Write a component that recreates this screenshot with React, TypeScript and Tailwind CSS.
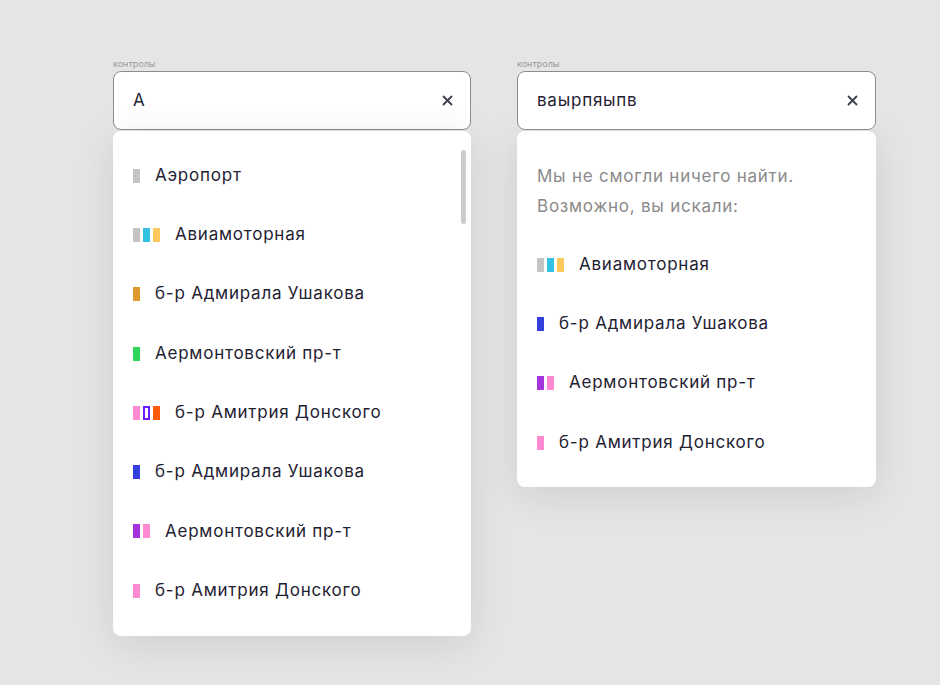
import React from "react";

type Bar = { color: string; outline?: boolean };
type Station = { name: string; bars: Bar[] };

const gray = { color: "bg-[#c4c4c4]" };
const cyan = { color: "bg-[#33c1e3]" };
const yellow = { color: "bg-[#ffc85c]" };

const allStations: Station[] = [
  { name: "Аэропорт", bars: [gray] },
  { name: "Авиамоторная", bars: [gray, cyan, yellow] },
  { name: "б-р Адмирала Ушакова", bars: [{ color: "bg-[#e0992f]" }] },
  { name: "Аермонтовский пр-т", bars: [{ color: "bg-[#2fd45c]" }] },
  {
    name: "б-р Амитрия Донского",
    bars: [
      { color: "bg-[#ff8ad2]" },
      { color: "bg-white", outline: true },
      { color: "bg-[#ff5a0a]" },
    ],
  },
  { name: "б-р Адмирала Ушакова", bars: [{ color: "bg-[#3340dd]" }] },
  {
    name: "Аермонтовский пр-т",
    bars: [{ color: "bg-[#a634dd]" }, { color: "bg-[#ff8ad2]" }],
  },
  { name: "б-р Амитрия Донского", bars: [{ color: "bg-[#ff8ad2]" }] },
];

const suggestions: Station[] = [
  { name: "Авиамоторная", bars: [gray, cyan, yellow] },
  { name: "б-р Адмирала Ушакова", bars: [{ color: "bg-[#3340dd]" }] },
  {
    name: "Аермонтовский пр-т",
    bars: [{ color: "bg-[#a634dd]" }, { color: "bg-[#ff8ad2]" }],
  },
  { name: "б-р Амитрия Донского", bars: [{ color: "bg-[#ff8ad2]" }] },
];

function ClearIcon() {
  return (
    <svg width="11" height="11" viewBox="0 0 11 11" fill="none">
      <path
        d="M1.5 1.5l8 8M9.5 1.5l-8 8"
        stroke="#3b3f4c"
        strokeWidth="1.8"
        strokeLinecap="round"
      />
    </svg>
  );
}

function StationRow({ station }: { station: Station }) {
  return (
    <div className="flex h-[59.3px] items-center">
      <div className="flex gap-[3px]">
        {station.bars.map((bar, i) =>
          bar.outline ? (
            <span
              key={i}
              className="h-[14px] w-[7px] border-2 border-[#6a1cff] bg-white"
            />
          ) : (
            <span key={i} className={`h-[14px] w-[7px] ${bar.color}`} />
          )
        )}
      </div>
      <span className="ml-[15px] text-[17px] tracking-[0.045em] text-[#1f2233]">
        {station.name}
      </span>
    </div>
  );
}

function SearchField({ value }: { value: string }) {
  return (
    <div className="flex flex-col">
      <span className="mb-[2px] h-[10px] text-[9px] leading-[10px] text-[#9a9a9a]">
        контролы
      </span>
      <div className="flex h-[59px] items-center justify-between rounded-[8px] border border-[#8c8c8c] bg-white pl-[19px] pr-[17px]">
        <span className="text-[17px] tracking-[0.045em] text-[#1f2233]">
          {value}
        </span>
        <ClearIcon />
      </div>
    </div>
  );
}

export default function App() {
  return (
    <div
      className="flex h-[685px] w-[940px] items-start gap-[46px] bg-[#e5e5e5] pl-[113px] pt-[59px]"
      style={{ fontFamily: "Inter, 'Noto Sans', sans-serif" }}
    >
      {/* Список с результатами */}
      <div className="w-[358px]">
        <SearchField value="А" />
        <div className="relative mt-px rounded-[8px] bg-white pb-[16px] pl-[20px] pt-[15px] shadow-[0_8px_40px_rgba(0,0,0,0.10)]">
          {allStations.map((s, i) => (
            <StationRow key={i} station={s} />
          ))}
          <div className="absolute right-[5px] top-[19px] h-[74px] w-[5px] rounded-full bg-[#cccccc]" />
        </div>
      </div>

      {/* Ничего не найдено */}
      <div className="w-[359px]">
        <SearchField value="ваырпяыпв" />
        <div className="mt-px rounded-[8px] bg-white pb-[15px] pl-[20px] pt-[30px] shadow-[0_8px_40px_rgba(0,0,0,0.10)]">
          <p className="text-[17px] leading-[30px] tracking-[0.045em] text-[#8a8a8a]">
            Мы не смогли ничего найти.
            <br />
            Возможно, вы искали:
          </p>
          <div className="mt-[14px]">
            {suggestions.map((s, i) => (
              <StationRow key={i} station={s} />
            ))}
          </div>
        </div>
      </div>
    </div>
  );
}
